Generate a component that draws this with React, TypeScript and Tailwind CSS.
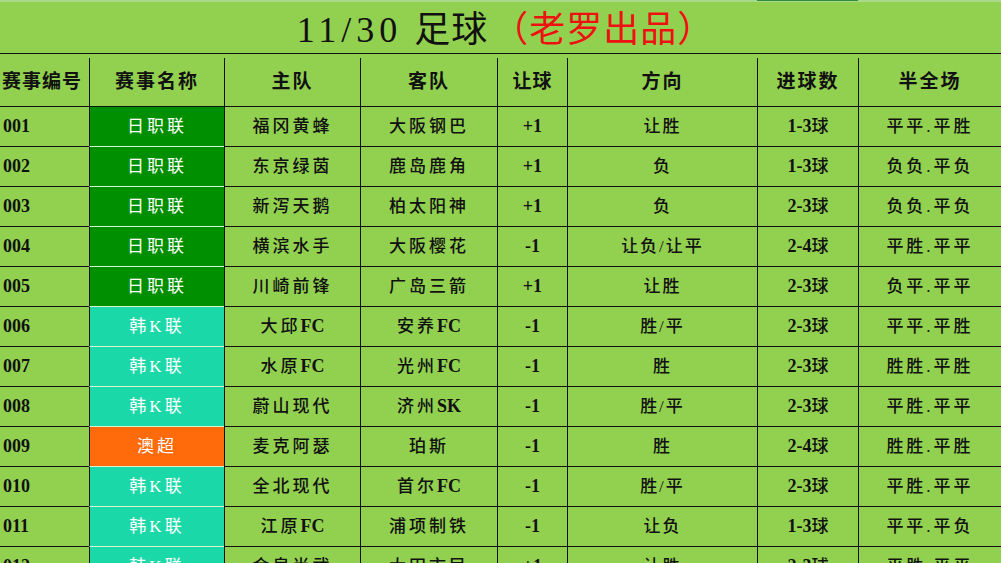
import React from 'react';

type Row = {
  id: string;
  league: string;
  home: string;
  away: string;
  handicap: string;
  pick: string;
  goals: string;
  htft: string;
};

const rows: Row[] = [
  { id: '001', league: '日职联', home: '福冈黄蜂', away: '大阪钢巴', handicap: '+1', pick: '让胜', goals: '1-3球', htft: '平平.平胜' },
  { id: '002', league: '日职联', home: '东京绿茵', away: '鹿岛鹿角', handicap: '+1', pick: '负', goals: '1-3球', htft: '负负.平负' },
  { id: '003', league: '日职联', home: '新泻天鹅', away: '柏太阳神', handicap: '+1', pick: '负', goals: '2-3球', htft: '负负.平负' },
  { id: '004', league: '日职联', home: '横滨水手', away: '大阪樱花', handicap: '-1', pick: '让负/让平', goals: '2-4球', htft: '平胜.平平' },
  { id: '005', league: '日职联', home: '川崎前锋', away: '广岛三箭', handicap: '+1', pick: '让胜', goals: '2-3球', htft: '负平.平平' },
  { id: '006', league: '韩K联', home: '大邱FC', away: '安养FC', handicap: '-1', pick: '胜/平', goals: '2-3球', htft: '平平.平胜' },
  { id: '007', league: '韩K联', home: '水原FC', away: '光州FC', handicap: '-1', pick: '胜', goals: '2-3球', htft: '胜胜.平胜' },
  { id: '008', league: '韩K联', home: '蔚山现代', away: '济州SK', handicap: '-1', pick: '胜/平', goals: '2-3球', htft: '平胜.平平' },
  { id: '009', league: '澳超', home: '麦克阿瑟', away: '珀斯', handicap: '-1', pick: '胜', goals: '2-4球', htft: '胜胜.平胜' },
  { id: '010', league: '韩K联', home: '全北现代', away: '首尔FC', handicap: '-1', pick: '胜/平', goals: '2-3球', htft: '平胜.平平' },
  { id: '011', league: '韩K联', home: '江原FC', away: '浦项制铁', handicap: '-1', pick: '让负', goals: '1-3球', htft: '平平.平负' },
  { id: '012', league: '韩K联', home: '金泉尚武', away: '大田市民', handicap: '+1', pick: '让胜', goals: '2-3球', htft: '平胜.平平' },
];

const leagueBg: Record<string, string> = {
  '日职联': 'bg-[#008f00]',
  '韩K联': 'bg-[#1ad8a8]',
  '澳超': 'bg-[#ff6a0a]',
};

const grid = 'grid grid-cols-[89px_135px_136px_137px_70px_190px_101px_143px]';
const cell = 'flex items-center justify-center border-l border-[#111]';

// latin runs get no letter spacing and a bold serif face, like the sheet
function Mixed({ text }: { text: string }) {
  const parts = text.split(/([A-Za-z0-9+\-]+)/).filter(Boolean);
  return (
    <>
      {parts.map((p, i) =>
        /^[A-Za-z0-9+\-]+$/.test(p) ? (
          <span key={i} className="tracking-normal font-bold text-[18px]">{p}</span>
        ) : (
          <span key={i}>{p}</span>
        )
      )}
    </>
  );
}

export default function App() {
  return (
    <div className="w-[1001px] h-[563px] overflow-hidden bg-[#92d050] text-[#111] font-['Liberation_Serif','Noto_Sans_CJK_SC',serif]">
      {/* strip at top */}
      <div className="relative h-[2px] bg-[#a9da8c]">
        <div className="absolute left-[757px] top-0 w-[101px] h-[1px] bg-[#2f8f3a]" />
      </div>

      {/* title */}
      <div className="h-[52px] flex items-center justify-center pt-[5px] pl-[10px] text-[36px] leading-none border-b border-[#111]">
        <span className="tracking-[5px]">11/30</span>
        <span className="ml-[12px] tracking-[1px]">足球</span>
        <span className="ml-[4px] text-[#ee1111] tracking-[1px]">（老罗出品）</span>
      </div>

      {/* header */}
      <div className={`${grid} h-[53px] pt-[4px] border-b border-[#111] text-[19px] font-bold`}>
        <div className="flex items-center pl-[2px] tracking-[1px]">赛事编号</div>
        <div className={`${cell} tracking-[2px]`}>赛事名称</div>
        <div className={`${cell} tracking-[2px]`}>主队</div>
        <div className={`${cell} tracking-[2px]`}>客队</div>
        <div className={`${cell} tracking-[1px]`}>让球</div>
        <div className={`${cell} tracking-[2px]`}>方向</div>
        <div className={`${cell} tracking-[2px]`}>进球数</div>
        <div className={`${cell} tracking-[2px]`}>半全场</div>
      </div>

      {rows.map((r) => (
        <div key={r.id} className={`${grid} h-[40px] text-[17px]`}>
          <div className="flex items-center pl-[3px] border-b border-[#111]">
            <Mixed text={r.id} />
          </div>
          <div className={`flex items-center justify-center border-l border-[#111] border-b border-b-[#d8f5d0] text-white tracking-[3px] ${leagueBg[r.league]}`}>
            {r.league}
          </div>
          <div className={`${cell} border-b tracking-[3px] font-medium`}><Mixed text={r.home} /></div>
          <div className={`${cell} border-b tracking-[3px] font-medium`}><Mixed text={r.away} /></div>
          <div className={`${cell} border-b`}><Mixed text={r.handicap} /></div>
          <div className={`${cell} border-b tracking-[2px] font-medium`}>{r.pick}</div>
          <div className={`${cell} border-b font-medium`}><Mixed text={r.goals} /></div>
          <div className={`${cell} border-b tracking-[3px] font-medium`}>{r.htft}</div>
        </div>
      ))}
    </div>
  );
}
